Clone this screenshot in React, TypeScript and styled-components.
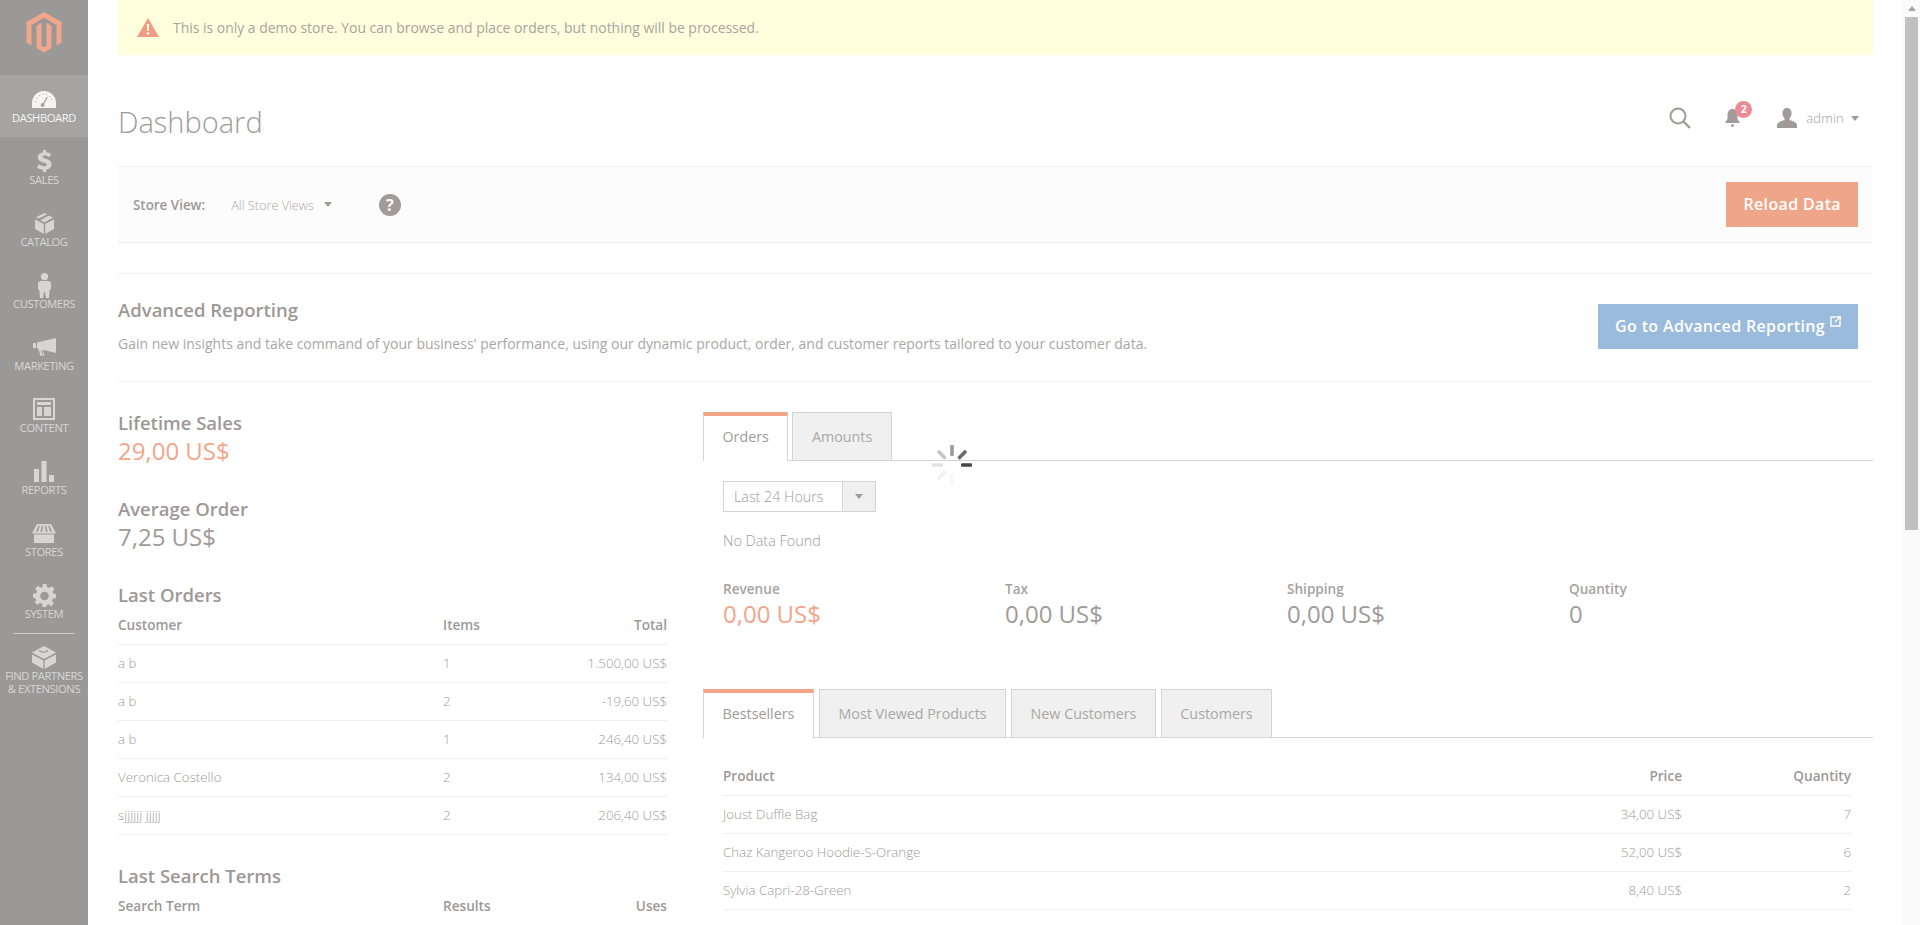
import React from "react";
import styled, { createGlobalStyle } from "styled-components";

const Global = createGlobalStyle`
  html, body { margin: 0; padding: 0; height: 925px; overflow: hidden; background: #fff; }
  body { font-family: "Open Sans", "Liberation Sans", sans-serif; color: #a09b98; font-size: 14px; }
  * { box-sizing: border-box; }
`;

const Page = styled.div`
  display: flex;
  width: 1920px;
  height: 925px;
  overflow: hidden;
  position: relative;
`;

const Sidebar = styled.nav`
  width: 88px;
  flex: none;
  background: #9b9997;
`;

const LogoBox = styled.div`
  height: 75px;
  display: flex;
  justify-content: center;
  padding-top: 12px;
  color: #f2a78d;
`;

const NavItem = styled.div<{ $active?: boolean; $divided?: boolean }>`
  height: 62px;
  padding-top: 12px;
  display: flex;
  flex-direction: column;
  align-items: center;
  position: relative;
  background: ${(p) => (p.$active ? "#a5a4a2" : "transparent")};
  color: ${(p) => (p.$active ? "#f6f5f4" : "#d7d6d5")};
  ${(p) =>
    p.$divided
      ? `&::before { content: ""; position: absolute; top: 0; left: 14px; right: 14px; height: 1px; background: #cdccca; }`
      : ""}
`;

const NavIcon = styled.div`
  height: 24px;
  display: flex;
  align-items: center;
  justify-content: center;
  color: #d7d6d5;
`;

const NavLabel = styled.div`
  font-size: 11.2px;
  line-height: 13px;
  text-transform: uppercase;
  text-align: center;
  white-space: nowrap;
  letter-spacing: -0.4px;
`;

const Main = styled.main`
  flex: 1;
  min-width: 0;
  padding: 0 30px;
`;

const Notice = styled.div`
  height: 55px;
  background: #ffffdd;
  display: flex;
  align-items: center;
  padding-left: 19px;
  gap: 14px;
  font-size: 13.94px;
  color: #a8a39f;
`;

const PageHeader = styled.header`
  height: 111px;
  display: flex;
  align-items: flex-start;
  justify-content: space-between;
  padding-top: 47px;
`;

const Title = styled.h1`
  margin: -1px 0 0;
  font-size: 29px;
  line-height: 42px;
  font-weight: 300;
  color: #9f9b99;
`;

const HeaderTools = styled.div`
  display: flex;
  align-items: center;
  height: 32px;
  margin-right: 14px;
`;

const BellWrap = styled.div`
  position: relative;
  margin-left: 34px;
  margin-right: 34px;
  width: 18px;
  height: 22px;
  display: flex;
  align-items: center;
  color: #a19c99;
`;

const Badge = styled.span`
  position: absolute;
  top: -6px;
  left: 10px;
  width: 17px;
  height: 17px;
  border-radius: 50%;
  background: #ec8a93;
  color: #fff;
  font-size: 10.5px;
  font-weight: 700;
  line-height: 17px;
  text-align: center;
`;

const UserName = styled.span`
  font-size: 13px;
  font-weight: 300;
  color: #a19c99;
  margin-left: 9px;
  margin-right: 7px;
  letter-spacing: 0.2px;
`;

const Caret = styled.span`
  display: inline-block;
  width: 0;
  height: 0;
  border-left: 4px solid transparent;
  border-right: 4px solid transparent;
  border-top: 5px solid #a19c99;
`;

const StoreBar = styled.section`
  height: 77px;
  background: #fcfcfc;
  border-top: 1px solid #f0f0f0;
  border-bottom: 1px solid #f0f0f0;
  display: flex;
  align-items: center;
  padding: 0 15px;
`;

const StoreLabel = styled.span`
  font-size: 13.4px;
  font-weight: 600;
  color: #9d9896;
`;

const StoreValue = styled.span`
  font-size: 12.7px;
  color: #aba7a5;
  font-weight: 300;
  margin-left: 26px;
  margin-right: 10px;
`;

const HelpIcon = styled.span`
  width: 22px;
  height: 22px;
  border-radius: 50%;
  background: #a09b98;
  color: #fcfcfc;
  margin-left: 47px;
  font-size: 16px;
  font-weight: 700;
  line-height: 22px;
  text-align: center;
`;

const ActionButton = styled.button<{ $tone: "orange" | "blue" }>`
  margin-left: auto;
  height: 45px;
  border: 0;
  padding: 0 17px 2px;
  font-family: inherit;
  font-size: 16px;
  font-weight: 600;
  letter-spacing: 0.35px;
  color: #fff;
  display: flex;
  align-items: center;
  background: ${(p) => (p.$tone === "orange" ? "#efa688" : "#9bbbdc")};
`;

const AdvancedSection = styled.section`
  margin-top: 30px;
  height: 109px;
  border-top: 1px solid #f0f0f0;
  border-bottom: 1px solid #f0f0f0;
  display: flex;
  align-items: flex-start;
  padding: 24px 15px 0 0;
`;

const AdvancedText = styled.div`
  flex: 1;
`;

const AdvancedAction = styled.div`
  margin-top: 6px;
`;

const SectionTitle = styled.h2`
  margin: 0;
  font-size: 18.5px;
  line-height: 24px;
  font-weight: 600;
  color: #9d9896;
`;

const AdvancedBody = styled.p`
  margin: 12px 0 0;
  font-size: 14px;
  line-height: 20px;
  color: #aaa6a4;
`;

const Columns = styled.div`
  display: grid;
  grid-template-columns: 549px 1fr;
  column-gap: 36px;
`;

const LeftColumn = styled.div`
  padding-top: 29px;
`;

const RightColumn = styled.div`
  padding-top: 30px;
`;

const StatValue = styled.div<{ $accent?: boolean }>`
  font-size: 24px;
  line-height: 32px;
  margin-bottom: 30px;
  color: ${(p) => (p.$accent ? "#f3a58a" : "#a09b98")};
`;

const DataRow = styled.div<{ $columns: string; $head?: boolean }>`
  display: grid;
  grid-template-columns: ${(p) => p.$columns};
  align-items: center;
  height: 38px;
  padding-bottom: 2px;
  border-bottom: 1px solid #f0f0f0;
  font-size: ${(p) => (p.$head ? "13.6px" : "13.3px")};
  font-weight: ${(p) => (p.$head ? 600 : 300)};
  color: ${(p) => (p.$head ? "#9d9896" : "#a09b98")};
`;

const Cell = styled.div<{ $right?: boolean }>`
  text-align: ${(p) => (p.$right ? "right" : "left")};
  white-space: nowrap;
`;

const TableBlock = styled.div`
  margin-bottom: 29px;
`;

const TabRow = styled.div<{ $wide?: boolean }>`
  display: flex;
  gap: ${(p) => (p.$wide ? "5px" : "4px")};
  height: 49px;
  border-bottom: 1px solid #d4d4d4;
`;

const Tab = styled.div<{ $active?: boolean }>`
  height: 49px;
  padding: ${(p) => (p.$active ? "0 18.5px 4px" : "0 18.5px")};
  display: flex;
  align-items: center;
  font-size: 14.3px;
  color: ${(p) => (p.$active ? "#a09b98" : "#aaa7a5")};
  background: ${(p) => (p.$active ? "#fff" : "#f0f0f0")};
  border: 1px solid #d4d4d4;
  border-bottom: ${(p) => (p.$active ? "0" : "1px solid #d4d4d4")};
  border-top: ${(p) => (p.$active ? "4px solid #f3a58a" : "1px solid #d4d4d4")};
`;

const ChartPanel = styled.div`
  padding: 20px 20px 0;
  height: 228px;
`;

const RangeSelect = styled.div`
  width: 153px;
  height: 31px;
  border: 1px solid #d4d4d4;
  display: flex;
  font-size: 14.3px;
  font-weight: 300;
  color: #a09b98;
`;

const RangeText = styled.div`
  flex: 1;
  padding-left: 10px;
  line-height: 29px;
`;

const RangeArrow = styled.div`
  width: 33px;
  background: #f0f0f0;
  border-left: 1px solid #d4d4d4;
  display: flex;
  align-items: center;
  justify-content: center;
`;

const NoData = styled.p`
  margin: 19px 0 0;
  line-height: 20px;
  font-size: 14.4px;
  font-weight: 300;
  color: #a09b98;
`;

const Totals = styled.div`
  display: grid;
  grid-template-columns: repeat(4, 282px);
  margin-top: 28px;
`;

const TotalLabel = styled.div`
  font-size: 13.6px;
  line-height: 20px;
  font-weight: 600;
  color: #a6a29f;
`;

const TotalValue = styled.div<{ $accent?: boolean }>`
  font-size: 24px;
  line-height: 30px;
  color: ${(p) => (p.$accent ? "#f3a58a" : "#a09b98")};
`;

const ProductTable = styled.div`
  padding: 20px 22px 0 20px;
`;

const Scrollbar = styled.div`
  width: 17px;
  flex: none;
  background: #fafafa;
  display: flex;
  flex-direction: column;
  align-items: center;
  padding-top: 6px;
`;

const ScrollArrow = styled.div`
  width: 0;
  height: 0;
  border-left: 4px solid transparent;
  border-right: 4px solid transparent;
  border-bottom: 5px solid #a3a3a3;
  margin-bottom: 6px;
`;

const ScrollThumb = styled.div`
  width: 13px;
  height: 513px;
  background: #c0c0c0;
`;

const Spinner = styled.svg`
  position: absolute;
  left: 930px;
  top: 443px;
`;

const ExternalIcon = styled.svg`
  margin: -8px 0 0 5px;
`;

const Logo = () => (
  <svg width="36" height="41" viewBox="0 0 35 41" fill="currentColor">
    <path d="M17.5 0 35 10v20.5l-5 2.9V13L17.5 5.8 5 13v20.4l-5-2.9V10z" />
    <path d="M20 10.8v22.9l-2.5 1.5-2.5-1.5V10.8l-5 2.9V36l7.5 4.5L25 36V13.7z" />
  </svg>
);

const icons: Record<string, React.ReactNode> = {
  dashboard: (
    <svg width="24" height="17" viewBox="0 0 24 17">
      <path fill="#f6f5f4" d="M0 17v-5C0 5 5.4 0 12 0s12 5 12 12v5z" />
      <path stroke="#a5a4a2" strokeWidth="1.4" strokeLinecap="round" d="M10.6 14.5 15 6.5" />
      <circle cx="10.6" cy="14" r="2" fill="#a5a4a2" />
      <path stroke="#a5a4a2" strokeWidth="1" strokeDasharray="1 2.6" fill="none" d="M4 11C4.5 6.5 8 3 12 3s7.5 3.5 8 8" />
    </svg>
  ),
  sales: (
    <svg width="15" height="22" viewBox="0 0 15 22" fill="currentColor">
      <path d="M6 0h3v2.2c2 .2 3.8.8 5 1.6l-1.2 3.3C11.300 6.200 9.500 5.600 7.800 5.600c-1.500 0-2.200.5-2.200 1.200 0 .9 1 1.300 3.200 2 3.400 1.100 5.700 2.300 5.700 5.500 0 2.800-2 4.800-5.400 5.300V22H6v-2.300c-2.300-.2-4.500-1-5.800-2l1.300-3.400c1.500 1 3.700 1.900 5.700 1.900 1.600 0 2.600-.6 2.600-1.500s-.9-1.400-3-2.100C3.500 11.500.9 10.400.9 7.300.9 4.700 2.800 2.800 6 2.300z" />
    </svg>
  ),
  catalog: (
    <svg width="19" height="21" viewBox="0 0 19 21" fill="currentColor">
      <path d="M0 6.500 8.800 11v10L0 16z" />
      <path d="M19 6.500 10.200 11v10l8.800-5z" />
      <path d="M9.500 0 12 1.300 3.700 5.600 1 4.300z" />
      <path d="M14 2.400 18 4.400 9.500 9.500 5.500 7.200z" />
    </svg>
  ),
  customers: (
    <svg width="13" height="25" viewBox="0 0 13 25" fill="currentColor">
      <circle cx="6.500" cy="3.600" r="3.600" />
      <path d="M3 8h7c1.800 0 3 1.200 3 3v4c0 1-.5 1.700-1.300 2L11 25H8l-1-6h-1l-1 6H2l-.700-8C.5 16.700 0 16 0 15v-4c0-1.800 1.200-3 3-3z" />
    </svg>
  ),
  marketing: (
    <svg width="23" height="18" viewBox="0 0 23 18" fill="currentColor">
      <path d="M23 0v15L10 11.800l1.600 5.400-4 .8-2.200-7.300L4 10.400V4.600z" />
      <path d="M0 5h3v5H0z" />
      <path fill="#9b9997" d="M8 12.200 9 12l1.400 4.300-.9.200z" />
    </svg>
  ),
  content: (
    <svg width="22" height="22" viewBox="0 0 22 22" fill="currentColor">
      <path fillRule="evenodd" d="M0 0h22v22H0zM2 2v18h18V2z" />
      <path d="M4 4h14v3H4zM4 9h5v9H4zM11 9h7v9h-7z" />
    </svg>
  ),
  reports: (
    <svg width="20" height="21" viewBox="0 0 20 21" fill="currentColor">
      <path d="M0 8h5v13H0zM7.500 0h5v21h-5zM15 14h5v7h-5z" />
    </svg>
  ),
  stores: (
    <svg width="24" height="19" viewBox="0 0 24 19" fill="currentColor">
      <path fillRule="evenodd" d="M5 0h14l5 9.500H0zM6.500 1.800 4 7.800h1.700l2.300-6zM9.800 1.800 8.400 7.800h1.800l.9-6zM12.900 1.800l.9 6h1.800l-1.400-6zM16 1.800l2.300 6H20l-2.500-6z" />
      <path d="M2 10.500h20V19H2z" />
    </svg>
  ),
  system: (
    <svg width="23" height="23" viewBox="0 0 24 24" fill="currentColor">
      <path fillRule="evenodd" d="M10 0h4l.7 3.400 2 .8L19.600 2.300l2.800 2.800-1.900 2.900.8 2L24 10.700v4l-3.400.7-.8 2 1.900 2.900-2.800 2.800-2.900-1.900-2 .8L14 24h-4l-.7-3.400-2-.8-2.900 1.900-2.800-2.800L3.500 17l-.8-2L0 14.300v-4l3.400-.7.800-2L2.300 4.700 5.100 1.900 8 3.800l2-.8zM12 8a4.500 4.500 0 1 0 0 9 4.500 4.500 0 0 0 0-9z" />
    </svg>
  ),
  partners: (
    <svg width="24" height="23" viewBox="0 0 24 23" fill="currentColor">
      <path d="M12 0 24 6.500 12 13 0 6.500z" />
      <path d="M0 8.500 11.300 14.600V23L0 16.500z" />
      <path d="M24 8.500 12.700 14.600V23L24 16.500z" />
      <path fill="#9b9997" d="M7 4h1.200c0 1 1.300 1.600 3.300 1.600S15 5 15 4h1.200c0 1.800-2 2.800-4.700 2.800S7 5.800 7 4z" />
    </svg>
  ),
};

const navItems = [
  { key: "dashboard", label: "Dashboard", active: true },
  { key: "sales", label: "Sales" },
  { key: "catalog", label: "Catalog" },
  { key: "customers", label: "Customers" },
  { key: "marketing", label: "Marketing" },
  { key: "content", label: "Content" },
  { key: "reports", label: "Reports" },
  { key: "stores", label: "Stores" },
  { key: "system", label: "System" },
  { key: "partners", label: "Find Partners\n& Extensions", divided: true },
];

const orders = [
  ["a b", "1", "1.500,00 US$"],
  ["a b", "2", "-19,60 US$"],
  ["a b", "1", "246,40 US$"],
  ["Veronica Costello", "2", "134,00 US$"],
  ["sjjjjjj jjjjj", "2", "206,40 US$"],
];

const products = [
  ["Joust Duffle Bag", "34,00 US$", "7"],
  ["Chaz Kangeroo Hoodie-S-Orange", "52,00 US$", "6"],
  ["Sylvia Capri-28-Green", "8,40 US$", "2"],
];

const LEFT_COLS = "325px 1fr 1fr";
const RIGHT_COLS = "1fr 200px 169px";

const spokes = [
  { a: 0, c: "#9d9b99" },
  { a: 45, c: "#6d6966" },
  { a: 90, c: "#4a4643" },
  { a: 135, c: "#ffffff" },
  { a: 180, c: "#f8f8f8" },
  { a: 225, c: "#f0f0f0" },
  { a: 270, c: "#e2e2e2" },
  { a: 315, c: "#c4c4c4" },
];

export default function App() {
  return (
    <Page>
      <Global />
      <Sidebar>
        <LogoBox>
          <Logo />
        </LogoBox>
        {navItems.map((n) => (
          <NavItem key={n.key} $active={n.active} $divided={n.divided}>
            <NavIcon>{icons[n.key]}</NavIcon>
            <NavLabel>
              {n.label.split("\n").map((l) => (
                <div key={l}>{l}</div>
              ))}
            </NavLabel>
          </NavItem>
        ))}
      </Sidebar>
      <Main>
        <Notice>
          <svg width="22" height="19" viewBox="0 0 22 19">
            <path fill="#ef9c84" d="M11 0 22 19H0z" />
            <path fill="#ffffdd" d="M9.800 6h2.400l-.4 7h-1.600zM9.800 14.300h2.400v2.300H9.800z" />
          </svg>
          This is only a demo store. You can browse and place orders, but nothing will be processed.
        </Notice>
        <PageHeader>
          <Title>Dashboard</Title>
          <HeaderTools>
            <svg width="22" height="22" viewBox="0 0 22 22" fill="none" stroke="#a09b98" strokeWidth="2">
              <circle cx="9" cy="9" r="7.500" />
              <path d="m14.500 14.500 6.500 6.500" strokeWidth="2.400" />
            </svg>
            <BellWrap>
              <svg width="15" height="18" viewBox="0 0 15 18" fill="currentColor">
                <path d="M7.500 0C10.500 0 12.500 2.500 12.500 6v4l2.500 4H0l2.500-4V6C2.500 2.500 4.500 0 7.500 0z" />
                <circle cx="7.500" cy="16.500" r="1.500" />
              </svg>
              <Badge>2</Badge>
            </BellWrap>
            <svg width="20" height="20" viewBox="0 0 20 20" fill="#a09b98">
              <path d="M10 0c2.800 0 4.600 2 4.600 5 0 2.300-1 4.500-2.200 5.600v1.400c3.500 1 7.600 2.600 7.600 5V20H0v-3c0-2.400 4.100-4 7.600-5v-1.400C6.400 9.500 5.400 7.300 5.400 5 5.400 2 7.200 0 10 0z" />
            </svg>
            <UserName>admin</UserName>
            <Caret />
          </HeaderTools>
        </PageHeader>

        <StoreBar>
          <StoreLabel>Store View:</StoreLabel>
          <StoreValue>All Store Views</StoreValue>
          <Caret />
          <HelpIcon>?</HelpIcon>
          <ActionButton $tone="orange">Reload Data</ActionButton>
        </StoreBar>

        <AdvancedSection>
          <AdvancedText>
            <SectionTitle>Advanced Reporting</SectionTitle>
            <AdvancedBody>
              Gain new insights and take command of your business' performance, using our dynamic product, order, and
              customer reports tailored to your customer data.
            </AdvancedBody>
          </AdvancedText>
          <AdvancedAction>
            <ActionButton $tone="blue">
              Go to Advanced Reporting
              <ExternalIcon width="11" height="11" viewBox="0 0 11 11" fill="none" stroke="#fff" strokeWidth="1.400">
                <path d="M6 1H1v9h9V5M5 6l5-5M6.500 .8H10.200V4.500" />
              </ExternalIcon>
            </ActionButton>
          </AdvancedAction>
        </AdvancedSection>

        <Columns>
          <LeftColumn>
            <SectionTitle>Lifetime Sales</SectionTitle>
            <StatValue $accent>29,00 US$</StatValue>
            <SectionTitle>Average Order</SectionTitle>
            <StatValue>7,25 US$</StatValue>
            <TableBlock>
              <SectionTitle>Last Orders</SectionTitle>
              <DataRow $columns={LEFT_COLS} $head>
                <Cell>Customer</Cell>
                <Cell>Items</Cell>
                <Cell $right>Total</Cell>
              </DataRow>
              {orders.map((r, i) => (
                <DataRow $columns={LEFT_COLS} key={i}>
                  <Cell>{r[0]}</Cell>
                  <Cell>{r[1]}</Cell>
                  <Cell $right>{r[2]}</Cell>
                </DataRow>
              ))}
            </TableBlock>
            <SectionTitle>Last Search Terms</SectionTitle>
            <DataRow $columns={LEFT_COLS} $head>
              <Cell>Search Term</Cell>
              <Cell>Results</Cell>
              <Cell $right>Uses</Cell>
            </DataRow>
          </LeftColumn>

          <RightColumn>
            <TabRow>
              <Tab $active>Orders</Tab>
              <Tab>Amounts</Tab>
            </TabRow>
            <ChartPanel>
              <RangeSelect>
                <RangeText>Last 24 Hours</RangeText>
                <RangeArrow>
                  <Caret />
                </RangeArrow>
              </RangeSelect>
              <NoData>No Data Found</NoData>
              <Totals>
                <div>
                  <TotalLabel>Revenue</TotalLabel>
                  <TotalValue $accent>0,00 US$</TotalValue>
                </div>
                <div>
                  <TotalLabel>Tax</TotalLabel>
                  <TotalValue>0,00 US$</TotalValue>
                </div>
                <div>
                  <TotalLabel>Shipping</TotalLabel>
                  <TotalValue>0,00 US$</TotalValue>
                </div>
                <div>
                  <TotalLabel>Quantity</TotalLabel>
                  <TotalValue>0</TotalValue>
                </div>
              </Totals>
            </ChartPanel>
            <TabRow $wide>
              <Tab $active>Bestsellers</Tab>
              <Tab>Most Viewed Products</Tab>
              <Tab>New Customers</Tab>
              <Tab>Customers</Tab>
            </TabRow>
            <ProductTable>
              <DataRow $columns={RIGHT_COLS} $head>
                <Cell>Product</Cell>
                <Cell $right>Price</Cell>
                <Cell $right>Quantity</Cell>
              </DataRow>
              {products.map((r, i) => (
                <DataRow $columns={RIGHT_COLS} key={i}>
                  <Cell>{r[0]}</Cell>
                  <Cell $right>{r[1]}</Cell>
                  <Cell $right>{r[2]}</Cell>
                </DataRow>
              ))}
            </ProductTable>
          </RightColumn>
        </Columns>
      </Main>
      <Scrollbar>
        <ScrollArrow />
        <ScrollThumb />
      </Scrollbar>
      <Spinner width="44" height="44" viewBox="0 0 44 44">
        {spokes.map((s) => (
          <rect key={s.a} x="20.200" y="2" width="3.600" height="11" rx="1" fill={s.c} transform={`rotate(${s.a} 22 22)`} />
        ))}
      </Spinner>
    </Page>
  );
}
